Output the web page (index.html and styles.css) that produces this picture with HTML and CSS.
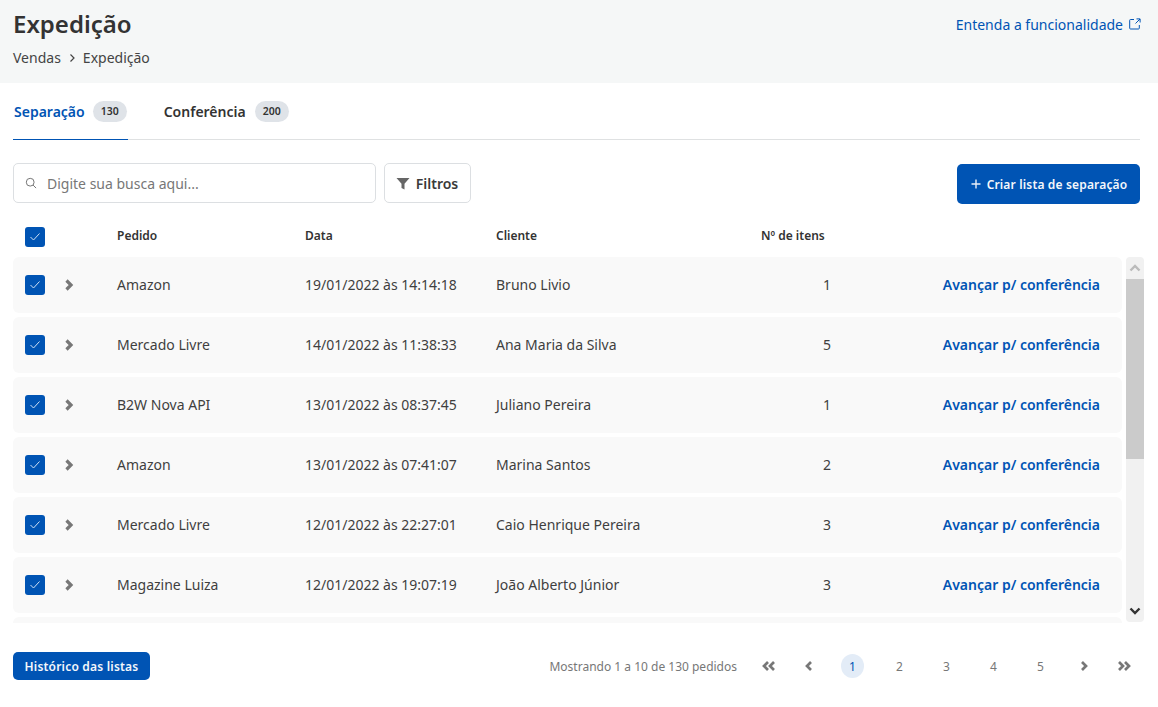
FILE: index.html
```html
<!DOCTYPE html>
<html lang="pt-BR">
<head>
<meta charset="utf-8">
<title>Expedição</title>
<link rel="stylesheet" href="styles.css">
</head>
<body>
<header class="page-head">
  <div>
    <h1 class="title">Expedição</h1>
    <nav class="crumbs"><span>Vendas</span>
      <svg class="crumb-sep" width="8" height="10" viewBox="0 0 8 10"><path d="M2.500 1.500 6 5 2.500 8.500" fill="none" stroke="#444" stroke-width="1.200"/></svg>
      <span>Expedição</span></nav>
  </div>
  <a class="help-link">Entenda a funcionalidade
    <svg width="12" height="12" viewBox="0 0 12 12" fill="none" stroke="#0054b4" stroke-width="1"><path d="M5 1.500H1.500a.8.8 0 0 0-.8.8v7.900a.8.8 0 0 0 .8.8h8a.8.8 0 0 0 .8-.8V7M7.500.9h3.600v3.600M11 1 6.500 5.500"/></svg>
  </a>
</header>

<main class="content">
  <div class="tabs">
    <div class="tab tab-active">Separação <span class="badge">130</span></div>
    <div class="tab">Conferência <span class="badge">200</span></div>
  </div>

  <div class="toolbar">
    <label class="search">
      <svg width="12" height="12" viewBox="0 0 12 12" fill="none" stroke="#777" stroke-width="1"><circle cx="5.200" cy="5.200" r="3.900"/><path d="m8.100 8.100 3 3"/></svg>
      <span>Digite sua busca aqui...</span>
    </label>
    <button class="btn-filter">
      <svg width="14" height="13" viewBox="0 0 14 13"><path d="M0.500 1h13L8.500 6.800V12.500L5.500 11V6.800Z" fill="#666"/></svg>
      Filtros
    </button>
    <button class="btn-primary btn-create">
      <svg width="10" height="10" viewBox="0 0 10 10" stroke="#e8eef8" stroke-width="1.400"><path d="M5 .5v9M.5 5h9"/></svg>
      Criar lista de separação
    </button>
  </div>

  <div class="grid-row table-head">
    <span class="check"><svg width="12" height="10" viewBox="0 0 12 10"><path d="m1.500 5 3 3 6-6.500" fill="none" stroke="#cfe0f5" stroke-width="1"/></svg></span>
    <span>Pedido</span><span>Data</span><span>Cliente</span><span>Nº de itens</span><span></span>
  </div>

  <div class="table-body">
    <div class="rows">
      <div class="grid-row row">
        <span class="check-cell"><span class="check"><svg width="12" height="10" viewBox="0 0 12 10"><path d="m1.500 5 3 3 6-6.500" fill="none" stroke="#cfe0f5" stroke-width="1"/></svg></span><svg class="expand" width="10" height="12" viewBox="0 0 10 12"><path d="M2.500 1.500 7 6l-4.500 4.500" fill="none" stroke="#777" stroke-width="3.200"/></svg></span>
        <span>Amazon</span><span>19/01/2022 às 14:14:18</span><span>Bruno Livio</span><span class="qty">1</span><a class="action">Avançar p/ conferência</a>
      </div>
      <div class="grid-row row">
        <span class="check-cell"><span class="check"><svg width="12" height="10" viewBox="0 0 12 10"><path d="m1.500 5 3 3 6-6.500" fill="none" stroke="#cfe0f5" stroke-width="1"/></svg></span><svg class="expand" width="10" height="12" viewBox="0 0 10 12"><path d="M2.500 1.500 7 6l-4.500 4.500" fill="none" stroke="#777" stroke-width="3.200"/></svg></span>
        <span>Mercado Livre</span><span>14/01/2022 às 11:38:33</span><span>Ana Maria da Silva</span><span class="qty">5</span><a class="action">Avançar p/ conferência</a>
      </div>
      <div class="grid-row row">
        <span class="check-cell"><span class="check"><svg width="12" height="10" viewBox="0 0 12 10"><path d="m1.500 5 3 3 6-6.500" fill="none" stroke="#cfe0f5" stroke-width="1"/></svg></span><svg class="expand" width="10" height="12" viewBox="0 0 10 12"><path d="M2.500 1.500 7 6l-4.500 4.500" fill="none" stroke="#777" stroke-width="3.200"/></svg></span>
        <span>B2W Nova API</span><span>13/01/2022 às 08:37:45</span><span>Juliano Pereira</span><span class="qty">1</span><a class="action">Avançar p/ conferência</a>
      </div>
      <div class="grid-row row">
        <span class="check-cell"><span class="check"><svg width="12" height="10" viewBox="0 0 12 10"><path d="m1.500 5 3 3 6-6.500" fill="none" stroke="#cfe0f5" stroke-width="1"/></svg></span><svg class="expand" width="10" height="12" viewBox="0 0 10 12"><path d="M2.500 1.500 7 6l-4.500 4.500" fill="none" stroke="#777" stroke-width="3.200"/></svg></span>
        <span>Amazon</span><span>13/01/2022 às 07:41:07</span><span>Marina Santos</span><span class="qty">2</span><a class="action">Avançar p/ conferência</a>
      </div>
      <div class="grid-row row">
        <span class="check-cell"><span class="check"><svg width="12" height="10" viewBox="0 0 12 10"><path d="m1.500 5 3 3 6-6.500" fill="none" stroke="#cfe0f5" stroke-width="1"/></svg></span><svg class="expand" width="10" height="12" viewBox="0 0 10 12"><path d="M2.500 1.500 7 6l-4.500 4.500" fill="none" stroke="#777" stroke-width="3.200"/></svg></span>
        <span>Mercado Livre</span><span>12/01/2022 às 22:27:01</span><span>Caio Henrique Pereira</span><span class="qty">3</span><a class="action">Avançar p/ conferência</a>
      </div>
      <div class="grid-row row">
        <span class="check-cell"><span class="check"><svg width="12" height="10" viewBox="0 0 12 10"><path d="m1.500 5 3 3 6-6.500" fill="none" stroke="#cfe0f5" stroke-width="1"/></svg></span><svg class="expand" width="10" height="12" viewBox="0 0 10 12"><path d="M2.500 1.500 7 6l-4.500 4.500" fill="none" stroke="#777" stroke-width="3.200"/></svg></span>
        <span>Magazine Luiza</span><span>12/01/2022 às 19:07:19</span><span>João Alberto Júnior</span><span class="qty">3</span><a class="action">Avançar p/ conferência</a>
      </div>
      <div class="row"></div>
    </div>
    <div class="scrollbar">
      <div class="scroll-btn"><svg width="12" height="8" viewBox="0 0 12 8"><path d="M1.500 6.500 6 2l4.500 4.500" fill="none" stroke="#bbb" stroke-width="2.400"/></svg></div>
      <div class="scroll-thumb"></div>
      <div class="scroll-btn scroll-btn-down"><svg width="12" height="8" viewBox="0 0 12 8"><path d="M1.500 1.500 6 6l4.500-4.500" fill="none" stroke="#333" stroke-width="2.400"/></svg></div>
    </div>
  </div>

  <footer class="foot">
    <button class="btn-primary btn-history">Histórico das listas</button>
    <div class="pager">
      <span class="pager-info">Mostrando 1 a 10 de 130 pedidos</span>
      <span class="pg pg-wide"><svg width="14" height="10" viewBox="0 0 14 10"><path d="M6 1 2 5l4 4M12 1 8 5l4 4" fill="none" stroke="#777" stroke-width="2.700"/></svg></span>
      <span class="pg pg-wide"><svg width="8" height="10" viewBox="0 0 8 10"><path d="M6 1 2 5l4 4" fill="none" stroke="#777" stroke-width="2.700"/></svg></span>
      <span class="pg pg-current">1</span>
      <span class="pg">2</span>
      <span class="pg">3</span>
      <span class="pg">4</span>
      <span class="pg">5</span>
      <span class="pg pg-wide"><svg width="8" height="10" viewBox="0 0 8 10"><path d="m2 1 4 4-4 4" fill="none" stroke="#777" stroke-width="2.700"/></svg></span>
      <span class="pg pg-wide"><svg width="14" height="10" viewBox="0 0 14 10"><path d="m2 1 4 4-4 4M8 1l4 4-4 4" fill="none" stroke="#777" stroke-width="2.700"/></svg></span>
    </div>
  </footer>
</main>
</body>
</html>
```

FILE: styles.css
```css
* { box-sizing: border-box; }
html, body { height: 100%; }
body {
  margin: 0;
  background: #fff;
  color: #3a3a3a;
  font-family: "Noto Sans", "Open Sans", sans-serif;
  font-size: 14px;
  overflow: hidden;
}
.page-head {
  height: 83px;
  background: #f5f7f7;
  padding: 7px 17px 0 13px;
  display: flex;
  justify-content: space-between;
  align-items: flex-start;
}
.title {
  margin: 0;
  font-size: 24px;
  line-height: 33px;
  font-weight: 600;
  color: #333;
}
.crumbs {
  margin-top: 8px;
  line-height: 20px;
  display: flex;
  align-items: center;
  gap: 7px;
  color: #444;
}
.help-link {
  margin-top: 8px;
  line-height: 20px;
  color: #0054b4;
  display: flex;
  align-items: flex-start;
  gap: 6px;
}
.help-link svg { margin-top: 3px; }
.content { padding: 0 14px 0 13px; }
.tabs {
  height: 57px;
  margin-right: 4px;
  display: flex;
  gap: 35px;
  border-bottom: 1px solid #dfe1e2;
}
.tab {
  display: flex;
  align-items: center;
  gap: 8px;
  height: 57px;
  padding: 0 1px;
  font-weight: 600;
  color: #333;
}
.tab-active {
  color: #0054b4;
  border-bottom: 1px solid #0054b4;
}
.tab + .tab .badge { margin-left: 1px; }
.badge {
  width: 34px;
  height: 21px;
  border-radius: 11px;
  background: #dfe3e8;
  color: #333;
  font-size: 10.500px;
  line-height: 21px;
  text-align: center;
  font-weight: 600;
}
.toolbar {
  margin-top: 23px;
  margin-right: 4px;
  height: 40px;
  display: flex;
  align-items: flex-start;
  gap: 8px;
}
.search {
  width: 363px;
  height: 40px;
  border: 1px solid #dcdfe2;
  border-radius: 5px;
  padding: 0 0 0 11px;
  display: flex;
  align-items: center;
  gap: 10px;
  color: #777;
}
.btn-filter {
  width: 87px;
  height: 40px;
  border: 1px solid #dcdfe2;
  border-radius: 5px;
  background: #fff;
  font: 600 14px "Noto Sans", sans-serif;
  color: #3a3a3a;
  display: flex;
  align-items: center;
  justify-content: center;
  gap: 6px;
  padding: 0 1px 0 0;
}
.btn-primary {
  border: 0;
  border-radius: 5px;
  background: #0054b4;
  color: #f4f7fb;
  font: 600 12px "Noto Sans", sans-serif;
  letter-spacing: .2px;
  padding: 0;
}
.btn-create {
  margin-top: 1px;
  margin-left: auto;
  width: 183px;
  height: 40px;
  display: flex;
  align-items: center;
  justify-content: center;
  gap: 6px;
  letter-spacing: .16px;
  padding-left: 1px;
}
.grid-row {
  display: grid;
  grid-template-columns: 92px 188px 191px 265px 70px 1fr;
  padding-left: 12px;
  align-items: center;
}
.table-head {
  height: 54px;
  padding-top: 13px;
  margin-right: 22px;
  font-size: 12px;
  font-weight: 600;
  color: #333;
}
.table-head > :not(.check) { padding-bottom: 2px; }
.check {
  width: 20px;
  height: 20px;
  border-radius: 3px;
  background: #0054b4;
  display: flex;
  align-items: center;
  justify-content: center;
  flex: none;
}
.check-cell {
  display: flex;
  align-items: center;
  gap: 19px;
}
.table-body {
  display: flex;
  height: 366px;
  gap: 4px;
}
.rows {
  width: 1109px;
  height: 366px;
  overflow: hidden;
  display: flex;
  flex-direction: column;
  gap: 4px;
}
.row {
  flex: none;
  height: 56px;
  background: #f9f9f9;
  border-radius: 6px;
  padding-right: 22px;
  color: #3f3f3f;
}
.row > :not(.check-cell) { padding-bottom: 2px; }
.qty { text-align: right; }
.action {
  text-align: right;
  color: #0054b4;
  font-weight: 600;
}
.scrollbar {
  width: 18px;
  height: 365px;
  background: #f1f1f1;
  border-radius: 4px;
  display: flex;
  flex-direction: column;
}
.scroll-btn {
  height: 22px;
  display: flex;
  align-items: center;
  justify-content: center;
}
.scroll-thumb {
  height: 180px;
  background: #cbcbcb;
}
.scroll-btn-down { margin-top: auto; }
.foot {
  margin-top: 29px;
  height: 28px;
  display: flex;
  justify-content: space-between;
  align-items: center;
}
.btn-history {
  width: 137px;
  height: 28px;
}
.pager {
  display: flex;
  align-items: center;
  color: #777;
  font-size: 12px;
}
.pager-info { margin-right: 12px; }
.pg {
  width: 47px;
  height: 24px;
  display: flex;
  align-items: center;
  justify-content: center;
  position: relative;
}
.pg-wide { width: 40px; }
.pg-current {
  color: #0054b4;
}
.pg-current::before {
  content: "";
  position: absolute;
  left: 12px;
  top: 0;
  width: 23px;
  height: 24px;
  border-radius: 50%;
  background: #e3ecf7;
  z-index: -1;
}
```
